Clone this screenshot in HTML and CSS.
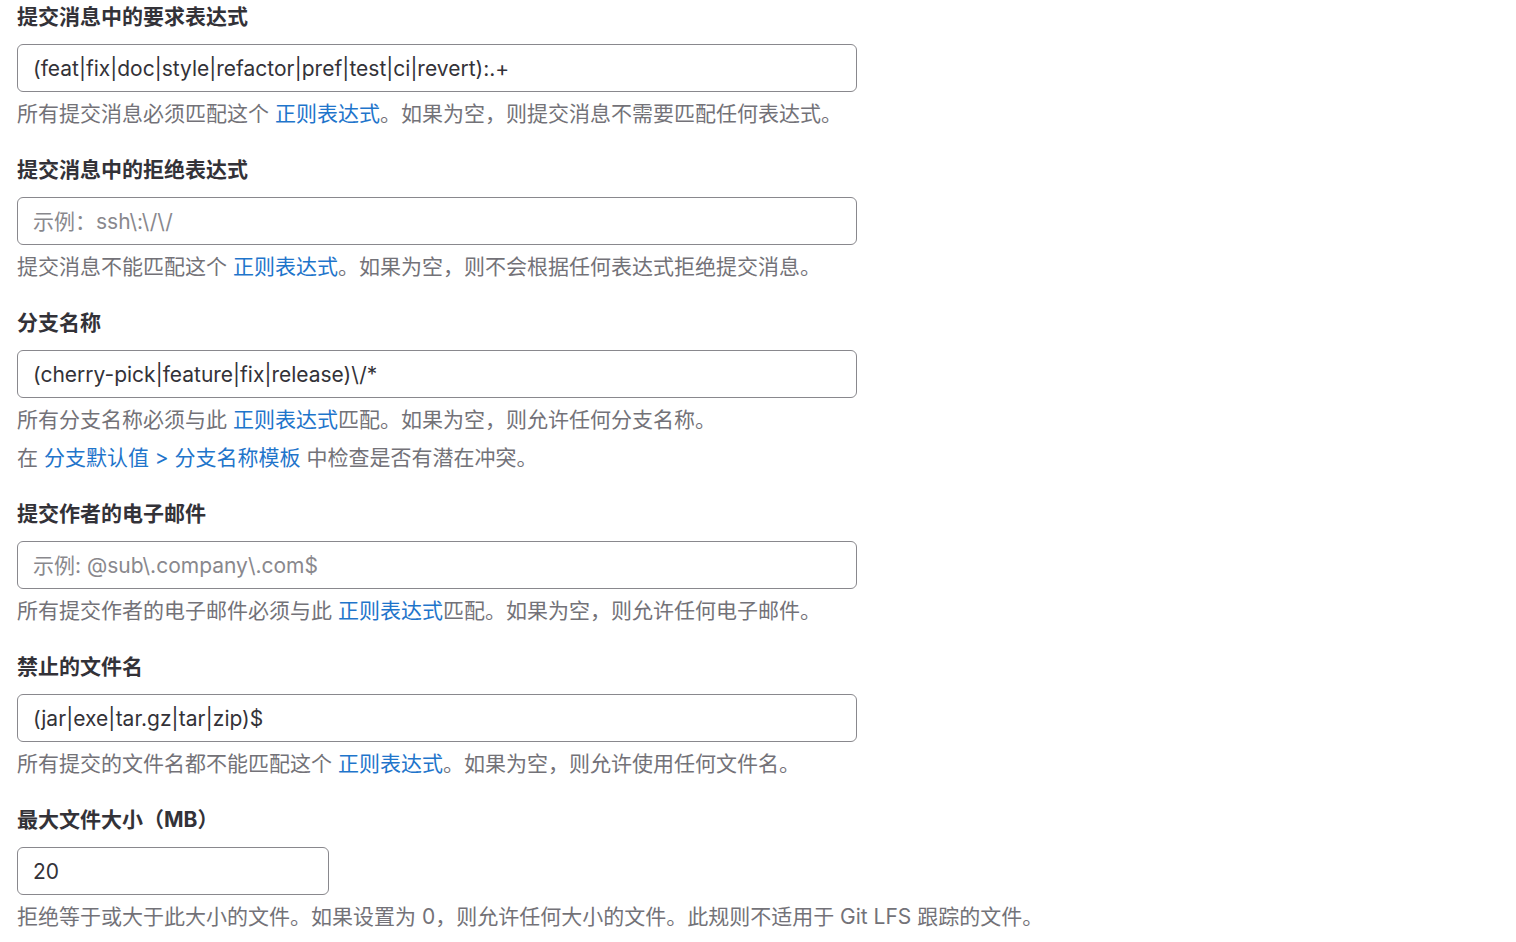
FILE: index.html
```html
<!DOCTYPE html>
<html lang="zh-CN">
<head>
<meta charset="utf-8">
<link rel="stylesheet" href="styles.css">
</head>
<body>
<form class="rules">
  <div class="group">
    <label class="label" for="f1">提交消息中的要求表达式</label>
    <input class="input" id="f1" type="text" value="(feat|fix|doc|style|refactor|pref|test|ci|revert):.+">
    <p class="help">所有提交消息必须匹配这个 <a href="#">正则表达式</a>。如果为空，则提交消息不需要匹配任何表达式。</p>
  </div>
  <div class="group">
    <label class="label" for="f2">提交消息中的拒绝表达式</label>
    <input class="input" id="f2" type="text" placeholder="示例：ssh\:\/\/">
    <p class="help">提交消息不能匹配这个 <a href="#">正则表达式</a>。如果为空，则不会根据任何表达式拒绝提交消息。</p>
  </div>
  <div class="group">
    <label class="label" for="f3">分支名称</label>
    <input class="input" id="f3" type="text" value="(cherry-pick|feature|fix|release)\/*">
    <p class="help">所有分支名称必须与此 <a href="#">正则表达式</a>匹配。如果为空，则允许任何分支名称。</p>
    <p class="help help-extra">在 <a href="#">分支默认值 &gt; 分支名称模板</a> 中检查是否有潜在冲突。</p>
  </div>
  <div class="group">
    <label class="label" for="f4">提交作者的电子邮件</label>
    <input class="input" id="f4" type="text" placeholder="示例: @sub\.company\.com$">
    <p class="help">所有提交作者的电子邮件必须与此 <a href="#">正则表达式</a>匹配。如果为空，则允许任何电子邮件。</p>
  </div>
  <div class="group">
    <label class="label" for="f5">禁止的文件名</label>
    <input class="input" id="f5" type="text" value="(jar|exe|tar.gz|tar|zip)$">
    <p class="help">所有提交的文件名都不能匹配这个 <a href="#">正则表达式</a>。如果为空，则允许使用任何文件名。</p>
  </div>
  <div class="group">
    <label class="label" for="f6">最大文件大小（MB）</label>
    <input class="input input-sm" id="f6" type="text" value="20">
    <p class="help">拒绝等于或大于此大小的文件。如果设置为 0，则允许任何大小的文件。此规则不适用于 Git LFS 跟踪的文件。</p>
  </div>
</form>
</body>
</html>
```
FILE: styles.css
```css
html, body {
  margin: 0;
  padding: 0;
  background: #ffffff;
}

body {
  font-family: "Inter", "Noto Sans CJK SC", sans-serif;
  color: #333238;
  font-size: 21px;
}

.rules {
  display: flex;
  flex-direction: column;
  gap: 23px;
  padding: 0 17px;
}

.group {
  display: flex;
  flex-direction: column;
  align-items: flex-start;
}

.label {
  display: block;
  font-weight: 700;
  font-size: 21px;
  line-height: 34px;
  height: 34px;
  color: #333238;
  margin-bottom: 10px;
}

.input {
  box-sizing: border-box;
  width: 840px;
  height: 48px;
  padding: 0 15px;
  border: 1px solid #89888d;
  border-radius: 6px;
  font-family: "Inter", "Noto Sans CJK SC", sans-serif;
  font-size: 21px;
  color: #333238;
  background: #ffffff;
  outline: none;
  margin: 0;
}

.input::placeholder {
  color: #89888d;
  opacity: 1;
}

.input-sm {
  width: 312px;
}

.help {
  margin: 6px 0 0;
  font-size: 21px;
  line-height: 32px;
  color: #737278;
}

.help-extra {
  margin-top: 6px;
}

.help a {
  color: #1f75cb;
  text-decoration: none;
}
```
